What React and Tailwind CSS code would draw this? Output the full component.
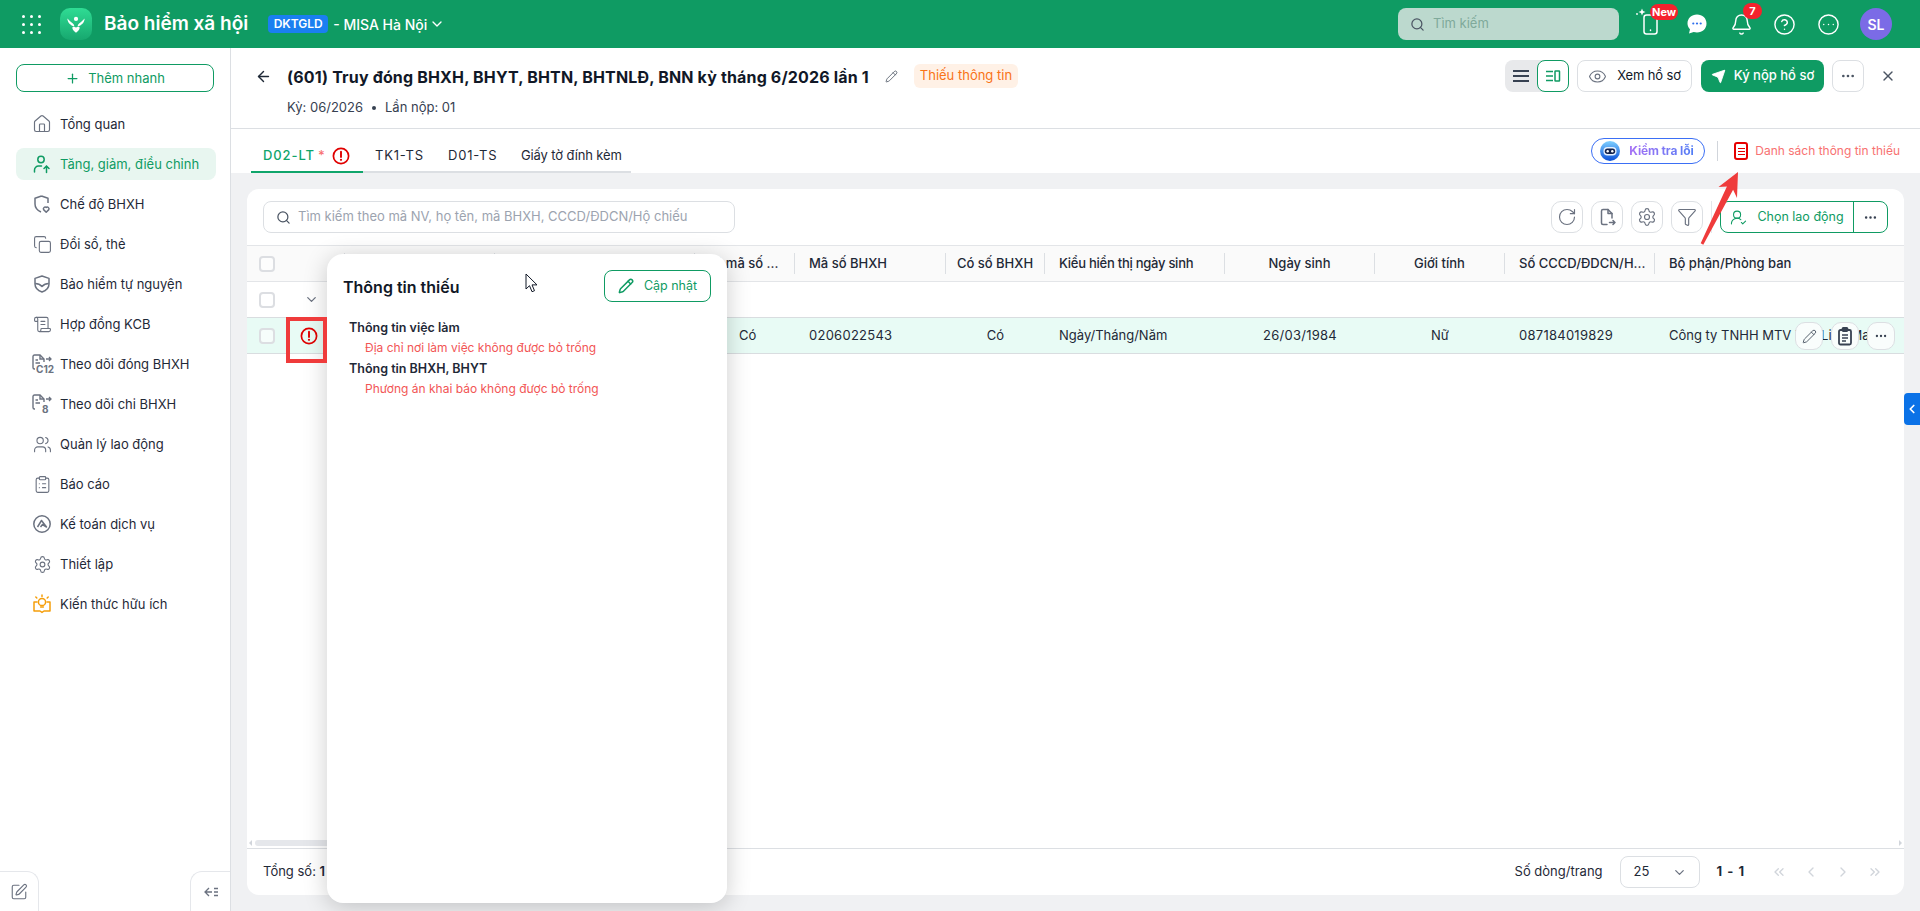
import React from 'react'
import {
    Plus, Search, ChevronDown, ChevronLeft, ChevronRight, ChevronsLeft, ArrowLeft, Pencil, X, Eye, Ellipsis, RotateCw,
    Settings, Funnel, House, Copy, Users, ClipboardList, CircleHelp, CircleEllipsis, Bell,
    Send, ScrollText, UserRoundCheck, SquarePen
} from 'lucide-react'

const green = '#0f9b63'

const WarnIcon = () => (
    <svg viewBox="0 0 18 18" className="w-[18px] h-[18px]" fill="none">
        <circle cx="9" cy="9" r="7.6" stroke="#e00000" strokeWidth="1.7" />
        <path d="M9 4.8v5.2" stroke="#e00000" strokeWidth="1.9" strokeLinecap="round" />
        <circle cx="9" cy="12.8" r="1.1" fill="#e00000" />
    </svg>
)

const Box = () => <span className="block w-4 h-4 rounded-[4px] border-2 border-[#dcdee2] bg-white/60" />

const DocArrow = ({ label }) => (
    <svg viewBox="0 0 24 24" className="w-6 h-6 overflow-visible" fill="none" stroke="#6b7280" strokeWidth="1.4">
        <path d="M5 17H4.500A1.500 1.500 0 0 1 3 15.500v-11A1.500 1.500 0 0 1 4.500 3H10l4 4v3" />
        <path d="M10 3v4h4M5.500 8H8M5.500 11H10" />
        <path d="M16 7h5M19 5l2 2-2 2" strokeWidth="1.3" />
        <text x={label.length > 1 ? '6' : '12'} y="21" fontSize="10" fontWeight="700" fill="#6b7280" stroke="none" fontFamily="Inter, sans-serif">{label}</text>
    </svg>
)

const UserUp = () => (
    <svg viewBox="0 0 20 20" className="w-5 h-5" fill="none" stroke={green} strokeWidth="1.5" strokeLinecap="round">
        <circle cx="9" cy="5.500" r="3.200" />
        <path d="M2.500 18v-2a4 4 0 0 1 4-4h3" />
        <path d="M14.500 18.500v-6M12 14.500l2.500-2.500 2.500 2.500" />
    </svg>
)

const ShieldHeart = () => (
    <svg viewBox="0 0 20 20" className="w-5 h-5" fill="none" stroke="#6b7280" strokeWidth="1.5" strokeLinejoin="round">
        <path d="M9.500 2 3 4.200V10c0 3.600 2.500 6.400 6 8M9.500 2 16 4.200V9" />
        <path d="M14.200 18.200 11.600 15.600a1.700 1.700 0 0 1 2.600-2.100 1.700 1.700 0 0 1 2.600 2.100z" />
    </svg>
)

const ShieldBand = () => (
    <svg viewBox="0 0 20 20" className="w-5 h-5" fill="none" stroke="#6b7280" strokeWidth="1.5" strokeLinejoin="round">
        <path d="M10 2 3 4.400V10c0 3.800 3 6.600 7 8 4-1.400 7-4.200 7-8V4.400z" />
        <path d="M3.200 9.500c2.800 0 5 1 6.800 3 1.800-2 4-3 6.800-3" />
    </svg>
)

const Gauge = () => (
    <svg viewBox="0 0 20 20" className="w-5 h-5" fill="none" stroke="#6b7280" strokeWidth="1.500" strokeLinejoin="round">
        <circle cx="10" cy="10" r="8.200" />
        <path d="M5.500 13 9.500 6.500 14.500 13 10.500 10.500 8.500 13" />
    </svg>
)

const BulbBook = () => (
    <svg viewBox="0 0 20 20" className="w-5 h-5" fill="none" stroke="#f59e0b" strokeWidth="1.500" strokeLinecap="round" strokeLinejoin="round">
        <circle cx="10" cy="8" r="3.600" />
        <path d="M8.600 13h2.800M10 1v1.400M3.800 3l1 1M16.200 3l-1 1" />
        <path d="M5 8H2v9h6l2 1.400 2-1.400h6V8h-3" />
    </svg>
)

const FileExport = () => (
    <svg viewBox="0 0 20 20" className="w-5 h-5" fill="none" stroke="#6b7280" strokeWidth="1.500" strokeLinecap="round" strokeLinejoin="round">
        <path d="M10 17.500H6A1.500 1.500 0 0 1 4.500 16V4A1.500 1.500 0 0 1 6 2.500h5L15 6.500v4.500" />
        <path d="M11 2.500v4h4M12.500 15.500H18M16 13.500l2 2-2 2" />
    </svg>
)

const menu = [
    { label: 'Tổng quan', icon: <House size={20} strokeWidth={1.4} color="#6b7280" /> },
    { label: 'Tăng, giảm, điều chỉnh', icon: <UserUp />, active: true },
    { label: 'Chế độ BHXH', icon: <ShieldHeart /> },
    { label: 'Đổi sổ, thẻ', icon: <Copy size={19} strokeWidth={1.4} color="#6b7280" /> },
    { label: 'Bảo hiểm tự nguyện', icon: <ShieldBand /> },
    { label: 'Hợp đồng KCB', icon: <ScrollText size={19} strokeWidth={1.4} color="#6b7280" /> },
    { label: 'Theo dõi đóng BHXH', icon: <DocArrow label="C12" /> },
    { label: 'Theo dõi chi BHXH', icon: <DocArrow label="8" /> },
    { label: 'Quản lý lao động', icon: <Users size={19} strokeWidth={1.4} color="#6b7280" /> },
    { label: 'Báo cáo', icon: <ClipboardList size={19} strokeWidth={1.4} color="#6b7280" /> },
    { label: 'Kế toán dịch vụ', icon: <Gauge /> },
    { label: 'Thiết lập', icon: <Settings size={19} strokeWidth={1.4} color="#6b7280" /> },
    { label: 'Kiến thức hữu ích', icon: <BulbBook /> },
]

const columns = [
    { w: 'w-[98px]' },
    { w: 'w-[150px]' },
    { w: 'w-[200px]' },
    { w: 'w-[100px]', title: 'Có mã số ...', value: 'Có', pad: 'pl-[10px]', valuePad: 'pl-[44px]' },
    { w: 'w-[151px]', title: 'Mã số BHXH', value: '0206022543', pad: 'pl-[14px]', valueClass: 'tracking-[0.02em]' },
    { w: 'w-[99px]', title: 'Có số BHXH', value: 'Có', center: true },
    { w: 'w-[180px]', title: 'Kiểu hiển thị ngày sinh', value: 'Ngày/Tháng/Năm', pad: 'pl-[14px]', titleClass: 'tracking-[-0.02em]' },
    { w: 'w-[150px]', title: 'Ngày sinh', value: '26/03/1984', center: true, valueClass: 'tracking-[0.02em]' },
    { w: 'w-[130px]', title: 'Giới tính', value: 'Nữ', center: true },
    { w: 'w-[150px]', title: 'Số CCCD/ĐDCN/H...', value: '087184019829', pad: 'pl-[14px]', valueClass: 'tracking-[0.02em]' },
    { w: 'w-[249px]', title: 'Bộ phận/Phòng ban', value: 'Công ty TNHH MTV Tấn Linh Mai', pad: 'pl-[14px]', last: true },
]

const ToolBtn = ({ children }) => (
    <button className="w-8 h-8 flex items-center justify-center rounded-[10px] border border-[#dcdfe3] bg-white">{children}</button>
)

const RowBtn = ({ children }) => (
    <button className="w-7 h-7 flex items-center justify-center rounded-[10px] border border-[#dcdfe3] bg-[#f9fdfc]">{children}</button>
)

const Logo = () => (
    <div className="w-8 h-8 rounded-[10px] bg-gradient-to-b from-[#2fdc94] to-[#17a86f] flex items-center justify-center">
        <svg viewBox="0 0 24 24" className="w-[22px] h-[22px]" fill="white">
            <circle cx="12" cy="6.500" r="2.300" />
            <path d="M2.500 6c.6 4.800 3.300 7.400 7.800 8.800-.2-3-2.800-3.900-4.400-5.400C4.700 8.300 3.900 7 2.500 6zM21.500 6c-.6 4.800-3.300 7.400-7.800 8.800.2-3 2.800-3.900 4.400-5.400C19.300 8.300 20.100 7 21.500 6z" />
            <path d="M12 21.500c-2.400-1.800-4-3.400-4-5.300 0-1.400 1.800-1.800 4-.3 2.200-1.500 4-1.100 4 .3 0 1.900-1.600 3.500-4 5.300z" />
        </svg>
    </div>
)

const Robot = () => (
    <svg viewBox="0 0 20 20" className="w-5 h-5">
        <defs>
            <linearGradient id="bot" x1="0" y1="0" x2="0" y2="1">
                <stop offset="0" stopColor="#7fd0ff" />
                <stop offset="1" stopColor="#0b4fd8" />
            </linearGradient>
        </defs>
        <circle cx="10" cy="10" r="10" fill="url(#bot)" />
        <rect x="3.500" y="6" width="13" height="8.500" rx="4" fill="#e8f2ff" />
        <rect x="4.800" y="7.500" width="10.400" height="5.500" rx="2.700" fill="#13224d" />
        <circle cx="7.700" cy="10.200" r="1.200" fill="#fff" />
        <circle cx="12.300" cy="10.200" r="1.200" fill="#fff" />
    </svg>
)

const App = () => {
    return (
        <div className="relative w-[1920px] h-[911px] overflow-hidden flex flex-col bg-white text-[13px] text-[#1f2937] font-['Inter',sans-serif]">
            {/* Thanh trên */}
            <header className="h-12 shrink-0 flex items-center bg-[#0f9b63] text-white">
                <div className="ml-[22px] w-[19px] grid grid-cols-3 gap-[5px]">
                    {[0, 1, 2, 3, 4, 5, 6, 7, 8].map((i) => (
                        <span key={i} className="w-[3px] h-[3px] rounded-full bg-white" />
                    ))}
                </div>
                <div className="ml-[19px]"><Logo /></div>
                <span className="ml-3 text-[19px] font-semibold whitespace-nowrap">Bảo hiểm xã hội</span>
                <span className="ml-5 h-[18px] w-[60px] flex items-center justify-center rounded bg-[#1a7ff0] text-[12px] font-semibold">DKTGLD</span>
                <span className="ml-[5px] text-[14px] font-medium whitespace-nowrap">- MISA Hà Nội</span>
                <ChevronDown size={16} className="ml-[2px]" />

                <div className="ml-auto w-[221px] h-8 rounded-lg bg-[#bcd9ce] flex items-center px-3 gap-2 text-[#7fa99a]">
                    <Search size={15} color="#4b5563" />
                    <span>Tìm kiếm</span>
                </div>
                <div className="relative ml-[20px] w-6 h-8 flex items-center justify-center">
                    <svg viewBox="0 0 24 32" className="w-6 h-8 overflow-visible" fill="none" stroke="white" strokeWidth="1.500">
                        <rect x="5" y="7" width="13" height="19" rx="2.500" />
                        <path d="M11.500 22v.6" strokeLinecap="round" />
                        <path d="M3 0.500l1 2.500 2.500 1-2.500 1-1 2.500-1-2.500-2.500-1 2.500-1z" fill="white" stroke="none" />
                        <circle cx="-2" cy="6" r="0.900" fill="white" stroke="none" />
                    </svg>
                    <span className="absolute left-[11px] -top-[4px] h-4 px-[2px] rounded-full bg-[#f5222d] text-[11px] font-bold flex items-center">New</span>
                </div>
                <div className="ml-[22px] w-6 h-6 relative flex items-center justify-center">
                    <svg viewBox="0 0 24 24" className="w-6 h-6" fill="white">
                        <path d="M12 2.500c5.500 0 9.500 3.800 9.500 9s-4 9-9.500 9c-1.200 0-2.300-.2-3.300-.5L4 21.500l1-4.200c-1.600-1.600-2.500-3.600-2.500-5.800 0-5.200 4-9 9.500-9z" />
                        <circle cx="8.300" cy="11.500" r="1.100" fill="#2f6fed" />
                        <circle cx="12" cy="11.500" r="1.100" fill="#2f6fed" />
                        <circle cx="15.700" cy="11.500" r="1.100" fill="#2f6fed" />
                    </svg>
                </div>
                <div className="relative ml-5 w-6 h-6 flex items-center justify-center">
                    <Bell size={23} strokeWidth={1.500} />
                    <span className="absolute left-[14px] -top-[9px] w-[19px] h-4 rounded-full bg-[#f5222d] text-[11px] font-bold flex items-center justify-center">7</span>
                </div>
                <CircleHelp size={23} strokeWidth={1.500} className="ml-5" />
                <CircleEllipsis size={23} strokeWidth={1.500} className="ml-[21px]" />
                <span className="ml-[20px] mr-7 w-8 h-8 rounded-full bg-[#7b6be6] flex items-center justify-center text-[14px] font-semibold">SL</span>
            </header>

            <div className="flex-1 flex min-h-0">
                {/* Menu trái */}
                <aside className="w-[231px] shrink-0 flex flex-col border-r border-[#dcdfe3]">
                    <button className="mt-4 ml-4 w-[198px] h-7 flex items-center justify-center gap-2 rounded-lg border border-[#0f9b63] text-[#0f9b63]">
                        <Plus size={15} />
                        <span className="pt-[2px]">Thêm nhanh</span>
                    </button>
                    <nav className="mt-4 ml-4 w-[200px] flex flex-col gap-2">
                        {menu.map((item) => (
                            <div key={item.label} className={`h-8 flex items-center pl-4 gap-2 rounded-lg whitespace-nowrap ${item.active ? 'bg-[#e8f6f0] text-[#0f9b63]' : ''}`}>
                                <span className="w-5 h-5 flex items-center justify-center">{item.icon}</span>
                                <span className="pt-[2px]">{item.label}</span>
                            </div>
                        ))}
                    </nav>
                    <div className="mt-auto flex justify-between">
                        <div className="w-[39px] h-10 rounded-tr-xl border-t border-r border-[#e5e7eb] flex items-center justify-center">
                            <SquarePen size={18} strokeWidth={1.500} color="#6b7280" />
                        </div>
                        <div className="w-10 h-10 rounded-tl-xl border-t border-l border-[#e5e7eb] flex items-center justify-center">
                            <svg viewBox="0 0 16 16" className="w-4 h-4" fill="none" stroke="#6b7280" strokeWidth="1.300">
                                <path d="M6 4 2 8l4 4M2 8h7M11 4.500h4M11 8h4M11 11.500h4" />
                            </svg>
                        </div>
                    </div>
                </aside>

                <main className="flex-1 min-w-0 flex flex-col bg-[#f0f1f3]">
                    {/* Tiêu đề */}
                    <div className="h-[81px] shrink-0 bg-white border-b border-[#dcdfe3] pl-6 pr-6">
                        <div className="mt-3 h-8 flex items-center">
                            <ArrowLeft size={17} strokeWidth={2} />
                            <h1 className="ml-[15px] pt-[2px] text-[16px] font-bold tracking-[0.01em] text-[#111827] whitespace-nowrap">(601) Truy đóng BHXH, BHYT, BHTN, BHTNLĐ, BNN kỳ tháng 6/2026 lần 1</h1>
                            <Pencil size={13} strokeWidth={1.500} className="ml-4" color="#4b5563" />
                            <span className="ml-4 h-6 px-[6px] rounded-md bg-[#fff1e6] text-[#f97316] flex items-center whitespace-nowrap">Thiếu thông tin</span>
                            <div className="ml-auto flex items-center">
                                <div className="w-16 h-8 rounded-lg bg-[#e8e9eb] flex">
                                    <span className="w-8 h-8 flex items-center justify-center">
                                        <svg viewBox="0 0 16 16" className="w-4 h-4" fill="none" stroke="#374151" strokeWidth="2">
                                            <path d="M0 3h16M0 8h16M0 13h16" />
                                        </svg>
                                    </span>
                                    <span className="w-8 h-8 flex items-center justify-center rounded-lg border border-[#0f9b63] bg-white">
                                        <svg viewBox="0 0 16 16" className="w-4 h-4" fill="none" stroke="#0f9b63" strokeWidth="1.500">
                                            <path d="M1 3.500h7M1 8h7M1 12.500h7" />
                                            <rect x="10" y="3" width="4.500" height="10" rx="0.500" />
                                        </svg>
                                    </span>
                                </div>
                                <button className="ml-2 w-[115px] h-8 rounded-lg border border-[#dcdfe3] flex items-center justify-center gap-[10px] text-[#111827]">
                                    <Eye size={19} strokeWidth={1.400} color="#6b7280" />
                                    <span className="tracking-[-0.01em]">Xem hồ sơ</span>
                                </button>
                                <button className="ml-[9px] w-[123px] h-8 rounded-lg bg-[#0f9b63] text-white font-medium flex items-center justify-center gap-2">
                                    <Send size={15} fill="white" strokeWidth={1.400} />
                                    <span>Ký nộp hồ sơ</span>
                                </button>
                                <button className="ml-2 w-8 h-8 rounded-lg border border-[#dcdfe3] flex items-center justify-center">
                                    <Ellipsis size={16} color="#4b5563" />
                                </button>
                                <X size={16} color="#4b5563" className="ml-4" />
                            </div>
                        </div>
                        <div className="mt-[6px] ml-8 flex items-center text-[#374151]">
                            <span>Kỳ: 06/2026</span>
                            <span className="mx-[9px] w-1 h-1 rounded-full bg-[#374151]" />
                            <span>Lần nộp: 01</span>
                        </div>
                    </div>

                    {/* Tabs */}
                    <div className="h-[44px] shrink-0 bg-white flex items-end pl-5 pr-[20px]">
                        <div className="flex border-b-2 border-[#dcdfe3] h-[31px]">
                            <div className="w-[112px] -mb-[2px] border-b-2 border-[#10a56b] flex items-center pl-3 pb-[2px] text-[#10a56b] font-medium">
                                <span className="tracking-[0.07em]">D02-LT</span>
                                <span className="ml-[3px] text-[#f87171]">*</span>
                                <span className="ml-[7px]"><WarnIcon /></span>
                            </div>
                            <div className="w-[73px] pl-3 pb-[2px] flex items-center tracking-[0.06em]">TK1-TS</div>
                            <div className="w-[73px] pl-3 pb-[2px] flex items-center tracking-[0.06em]">D01-TS</div>
                            <div className="w-[122px] pl-3 pb-[2px] flex items-center whitespace-nowrap tracking-[-0.01em]">Giấy tờ đính kèm</div>
                        </div>
                        <div className="ml-auto self-center flex items-center">
                            <div className="w-[114px] h-[26px] rounded-full border border-[#3b6ff5] flex items-center pl-2 gap-[9px] text-[12px] font-bold tracking-[-0.01em] whitespace-nowrap">
                                <Robot />
                                <span className="bg-gradient-to-r from-[#a56ff5] to-[#4f7df5] text-transparent bg-clip-text">Kiểm tra lỗi</span>
                            </div>
                            <span className="ml-3 w-px h-5 bg-[#d1d5db]" />
                            <span className="ml-4 w-[14px] h-[18px] rounded-[3px] border-2 border-[#e60000] bg-white flex flex-col items-center justify-center gap-[2px]">
                                <span className="w-[7px] h-px bg-[#e60000]" />
                                <span className="w-[7px] h-px bg-[#e60000]" />
                                <span className="w-[7px] h-px bg-[#e60000]" />
                            </span>
                            <span className="ml-[7px] text-[12px] text-[#f87171] whitespace-nowrap">Danh sách thông tin thiếu</span>
                        </div>
                    </div>

                    {/* Bảng */}
                    <div className="flex-1 min-h-0 m-4 rounded-xl bg-white flex flex-col overflow-hidden">
                        <div className="h-14 shrink-0 flex items-center px-4">
                            <div className="w-[472px] h-8 rounded-lg border border-[#dcdfe3] flex items-center pl-3 gap-[7px] text-[#9ca3af] whitespace-nowrap">
                                <Search size={15} color="#4b5563" />
                                <span>Tìm kiếm theo mã NV, họ tên, mã BHXH, CCCD/ĐDCN/Hộ chiếu</span>
                            </div>
                            <div className="ml-auto flex items-center gap-2">
                                <ToolBtn><RotateCw size={20} strokeWidth={1.400} color="#6b7280" /></ToolBtn>
                                <ToolBtn><FileExport /></ToolBtn>
                                <ToolBtn><Settings size={20} strokeWidth={1.400} color="#6b7280" /></ToolBtn>
                                <ToolBtn><Funnel size={20} strokeWidth={1.400} color="#6b7280" /></ToolBtn>
                            </div>
                            <span className="ml-2 w-px h-8 bg-[#e5e7eb]" />
                            <div className="ml-2 w-[168px] h-8 rounded-lg border border-[#0f9b63] flex text-[#0f9b63]">
                                <div className="flex-1 flex items-center justify-center gap-[10px] border-r border-[#0f9b63] whitespace-nowrap">
                                    <UserRoundCheck size={17} strokeWidth={1.500} />
                                    <span className="text-[12.5px]">Chọn lao động</span>
                                </div>
                                <div className="w-[33px] flex items-center justify-center"><Ellipsis size={15} color="#374151" /></div>
                            </div>
                        </div>

                        <div className="flex-1 min-h-0 relative">
                            <div className="h-[37px] flex items-center bg-[#fafafa] border-y border-[#e3e5e8] font-medium">
                                {columns.map((col, i) => (
                                    <div key={i} className={`${col.w} h-[21px] shrink-0 flex items-center whitespace-nowrap ${col.last ? '' : 'border-r border-[#dcdfe3]'} ${col.center ? 'justify-center' : ''} ${col.pad || ''} ${col.titleClass || ''}`}>
                                        {i === 0 ? <span className="ml-3"><Box /></span> : col.title}
                                    </div>
                                ))}
                            </div>
                            <div className="h-[35px] flex items-center">
                                <span className="ml-3"><Box /></span>
                                <ChevronDown size={15} color="#6b7280" className="ml-[29px]" />
                            </div>
                            <div className="h-[37px] flex items-center bg-[#e8fbf5] border-y border-[#d9dde0]">
                                {columns.map((col, i) => (
                                    <div key={i} className={`${col.w} shrink-0 flex items-center whitespace-nowrap ${col.center ? 'justify-center' : ''} ${col.valuePad || col.pad || ''} ${col.valueClass || ''}`}>
                                        {i === 0 ? (
                                            <>
                                                <span className="ml-3"><Box /></span>
                                                <span className="ml-[25px]"><WarnIcon /></span>
                                            </>
                                        ) : col.value}
                                    </div>
                                ))}
                            </div>
                            <div className="absolute right-[9px] top-[77px] flex gap-2">
                                <RowBtn><Pencil size={15} strokeWidth={1.500} color="#4b5563" /></RowBtn>
                                <RowBtn>
                                    <svg viewBox="0 0 20 20" className="w-5 h-5" fill="none" stroke="#374151" strokeWidth="1.800">
                                        <rect x="4" y="4" width="12" height="14.500" rx="1.500" />
                                        <rect x="7.500" y="2" width="5" height="3" rx="0.800" fill="#374151" />
                                        <path d="M7 9h6M7 12h6M7 15h4" strokeWidth="1.500" />
                                    </svg>
                                </RowBtn>
                                <RowBtn><Ellipsis size={14} color="#374151" /></RowBtn>
                            </div>
                            <div className="absolute left-0 right-0 bottom-[2px] h-[6px] flex items-center justify-between px-[2px]">
                                <span className="flex items-center gap-[3px]">
                                    <span className="w-0 h-0 border-y-[3px] border-y-transparent border-r-[3px] border-r-[#d1d5db]" />
                                    <span className="w-[400px] h-[6px] rounded-full bg-[#e5e7eb]" />
                                </span>
                                <span className="w-0 h-0 border-y-[3px] border-y-transparent border-l-[3px] border-l-[#d1d5db]" />
                            </div>
                        </div>

                        <div className="h-[47px] shrink-0 border-t border-[#dcdfe3] flex items-center pl-4">
                            <span>Tổng số: <b className="font-semibold">1</b></span>
                            <span className="ml-auto">Số dòng/trang</span>
                            <div className="ml-[17px] w-20 h-8 rounded-lg border border-[#dcdfe3] flex items-center justify-between pl-[13px] pr-3">
                                <span>25</span>
                                <ChevronDown size={15} color="#6b7280" />
                            </div>
                            <span className="ml-[17px] font-bold tracking-[1px] whitespace-nowrap">1 - 1</span>
                            <div className="ml-[26px] mr-[21px] flex items-center gap-4 text-[#d1d5db]">
                                <ChevronsLeft size={16} />
                                <ChevronLeft size={16} />
                                <ChevronRight size={16} />
                                <ChevronsLeft size={16} className="rotate-180" />
                            </div>
                        </div>
                    </div>
                </main>
            </div>

            {/* Popup thông tin thiếu */}
            <div className="absolute left-[327px] top-[254px] w-[400px] h-[649px] rounded-2xl bg-white shadow-[0_4px_24px_rgba(0,0,0,0.2)]">
                <div className="mt-4 pl-4 pr-4 flex items-center justify-between">
                    <h2 className="pt-[2px] text-[16px] font-semibold text-[#111827]">Thông tin thiếu</h2>
                    <button className="w-[107px] h-8 rounded-lg border border-[#0f9b63] text-[#0f9b63] flex items-center justify-center gap-[10px]">
                        <Pencil size={16} strokeWidth={2.200} />
                        <span className="text-[12.5px]">Cập nhật</span>
                    </button>
                </div>
                <div className="mt-4 pl-[22px] text-[12.5px] leading-5">
                    <div className="font-semibold">Thông tin việc làm</div>
                    <div className="pl-4 text-[12px] text-[#f25555]">Địa chỉ nơi làm việc không được bỏ trống</div>
                    <div className="mt-[1px] font-semibold">Thông tin BHXH, BHYT</div>
                    <div className="pl-4 text-[12px] text-[#f25555]">Phương án khai báo không được bỏ trống</div>
                </div>
            </div>

            {/* Đánh dấu trên ảnh */}
            <div className="absolute left-[286px] top-[317px] w-[41px] h-[46px] border-4 border-[#ef3b3b]" />
            <svg viewBox="0 0 60 85" className="absolute left-[1690px] top-[165px] w-[60px] h-[85px]" fill="#ef3b3b">
                <polygon points="48,7 47,33 43.1,24.7 13.3,79.7 10.7,78.3 36.9,21.5 28.5,22" />
            </svg>
            <svg viewBox="0 0 14 20" className="absolute left-[525px] top-[273px] w-[14px] h-5" fill="white" stroke="#111827" strokeWidth="1">
                <path d="M1 1v15l3.500-3.300 2.500 6 2.500-1-2.500-5.800h5z" />
            </svg>

            <div className="absolute right-0 top-[393px] w-4 h-8 rounded-l bg-[#0b72e7] flex items-center justify-center">
                <ChevronLeft size={14} color="white" strokeWidth={3} />
            </div>
        </div>
    )
}

export default App
